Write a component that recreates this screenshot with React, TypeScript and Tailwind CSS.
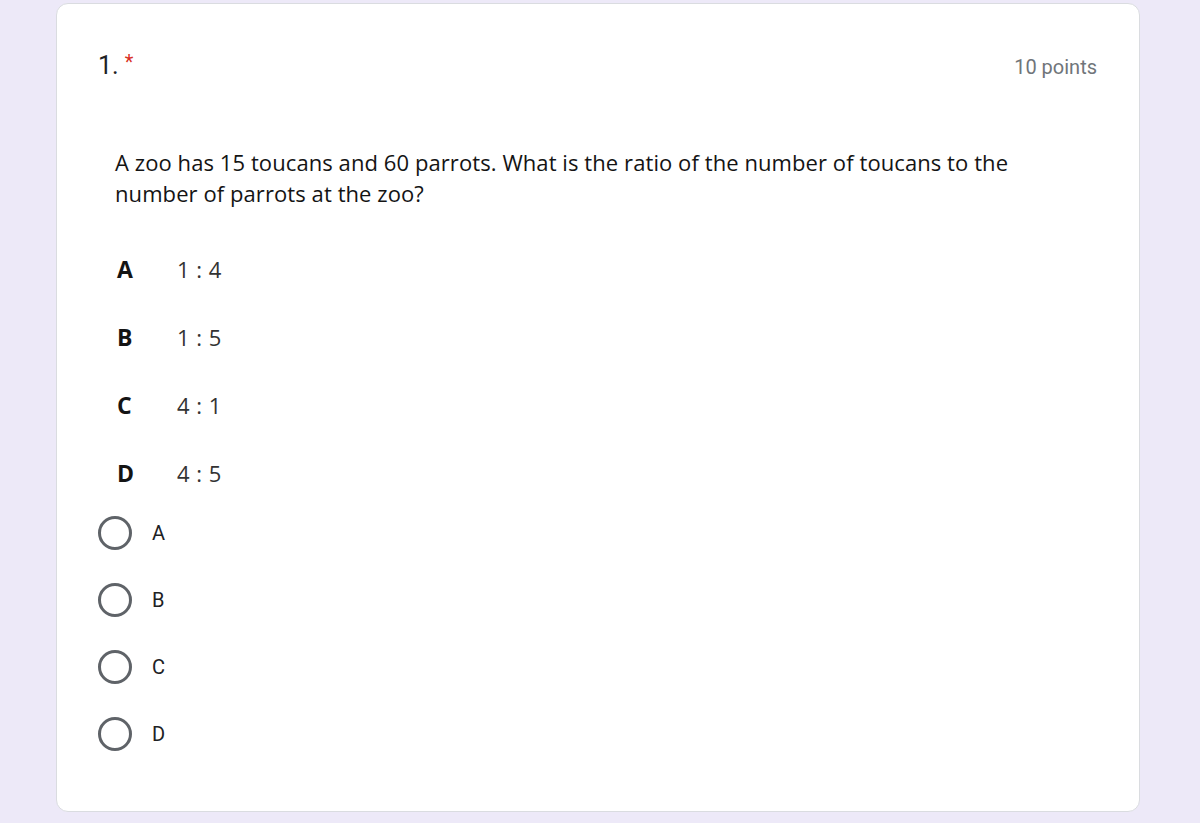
import React from "react";

const choices = [
  { letter: "A", value: "1 : 4" },
  { letter: "B", value: "1 : 5" },
  { letter: "C", value: "4 : 1" },
  { letter: "D", value: "4 : 5" },
];

function Radio({ label }: { label: string }) {
  return (
    <label className="flex h-[67px] items-center gap-[20px]">
      <span className="block h-[34px] w-[34px] rounded-full border-[3px] border-[#5f6368]" />
      <span className="text-[20px] text-[#202124]">{label}</span>
    </label>
  );
}

export default function App() {
  return (
    <div className="min-h-[823px] bg-[#ede9f8] pl-[56px] pr-[60px] pt-[3px] pb-[11px] font-['Roboto',sans-serif]">
      <div className="h-[809px] rounded-[12px] border border-[#dadce0] bg-white pl-[41px] pr-[42px] pt-[46px]">
        <div className="flex items-start justify-between">
          <div className="flex items-start text-[25px] leading-[32px] text-[#202124]">
            <span>1.</span>
            <span className="ml-[6px] text-[20px] leading-[24px] text-[#d93025]">*</span>
          </div>
          <span className="mt-[3px] text-[20px] leading-[28px] text-[#70757a]">10 points</span>
        </div>

        <div className="ml-[17px] mt-[65px] font-['Open_Sans',sans-serif] text-[#141414]">
          <p className="text-[22px] leading-[31px] tracking-[0.08px]">
            A zoo has 15 toucans and 60 parrots. What is the ratio of the number of toucans to the
            <br />
            number of parrots at the zoo?
          </p>
          <div className="mt-[26px] flex flex-col">
            {choices.map((c) => (
              <div key={c.letter} className="flex h-[68px] items-center">
                <span className="w-[62px] pl-[2px] text-[23px] font-bold">{c.letter}</span>
                <span className="text-[22px] tracking-[0.5px] text-[#333]">{c.value}</span>
              </div>
            ))}
          </div>
        </div>

        <div className="-mt-[8px] flex flex-col">
          {choices.map((c) => (
            <Radio key={c.letter} label={c.letter} />
          ))}
        </div>
      </div>
    </div>
  );
}
